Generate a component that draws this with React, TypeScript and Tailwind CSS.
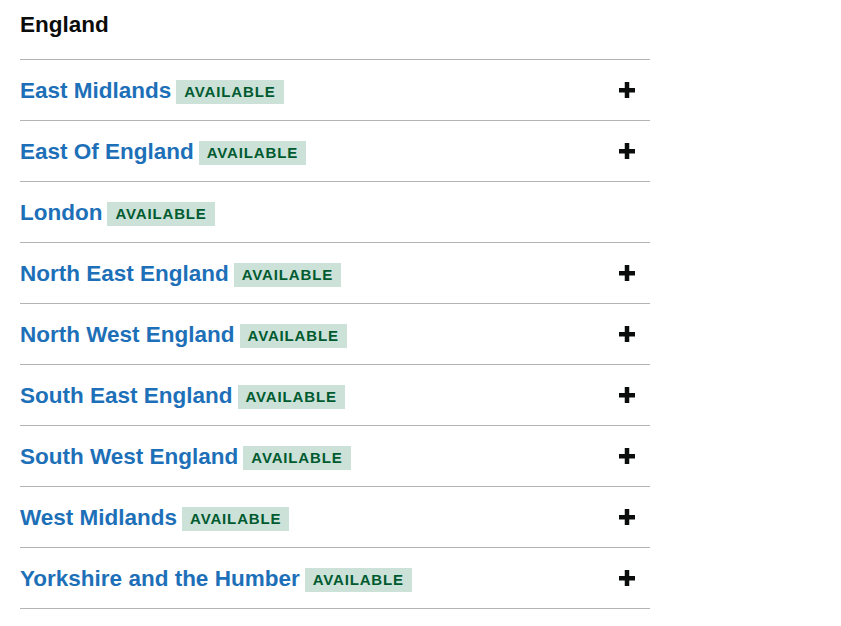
import React from 'react';

const regions = [
  { name: 'East Midlands', expandable: true },
  { name: 'East Of England', expandable: true },
  { name: 'London', expandable: false },
  { name: 'North East England', expandable: true },
  { name: 'North West England', expandable: true },
  { name: 'South East England', expandable: true },
  { name: 'South West England', expandable: true },
  { name: 'West Midlands', expandable: true },
  { name: 'Yorkshire and the Humber', expandable: true },
];

const PlusIcon: React.FC = () => (
  <svg width="16" height="16" viewBox="0 0 16 16" aria-hidden="true">
    <rect x="0" y="6" width="16" height="4.5" fill="#0b0c0c" />
    <rect x="5.75" y="0" width="4.5" height="16" fill="#0b0c0c" />
  </svg>
);

const App: React.FC = () => {
  return (
    <div className="min-h-screen w-full bg-white px-[20px] font-['Liberation_Sans',Arial,sans-serif]">
      <div className="w-[630px]">
        <h2 className="h-[59px] pt-[11px] text-[22.5px] font-bold leading-[28px] text-[#0b0c0c]">England</h2>

        <ul className="border-t border-[#b1b4b6]">
          {regions.map((region) => (
            <li
              key={region.name}
              className="flex h-[61px] items-center justify-between border-b border-[#b1b4b6] pr-[15px] pt-[2px]"
            >
              <div className="flex items-center gap-[5px]">
                <a href="#" className="text-[22.5px] font-bold leading-[28px] text-[#1d70b8]">
                  {region.name}
                </a>
                <span className="mt-[2px] flex h-[24px] items-center bg-[#cce2d8] pl-[8px] pr-[8px] text-[15px] font-bold uppercase tracking-[0.85px] text-[#005a30]">
                  Available
                </span>
              </div>
              {region.expandable && (
                <span className="-mt-[2px] flex">
                  <PlusIcon />
                </span>
              )}
            </li>
          ))}
        </ul>
      </div>
    </div>
  );
};

export default App;
